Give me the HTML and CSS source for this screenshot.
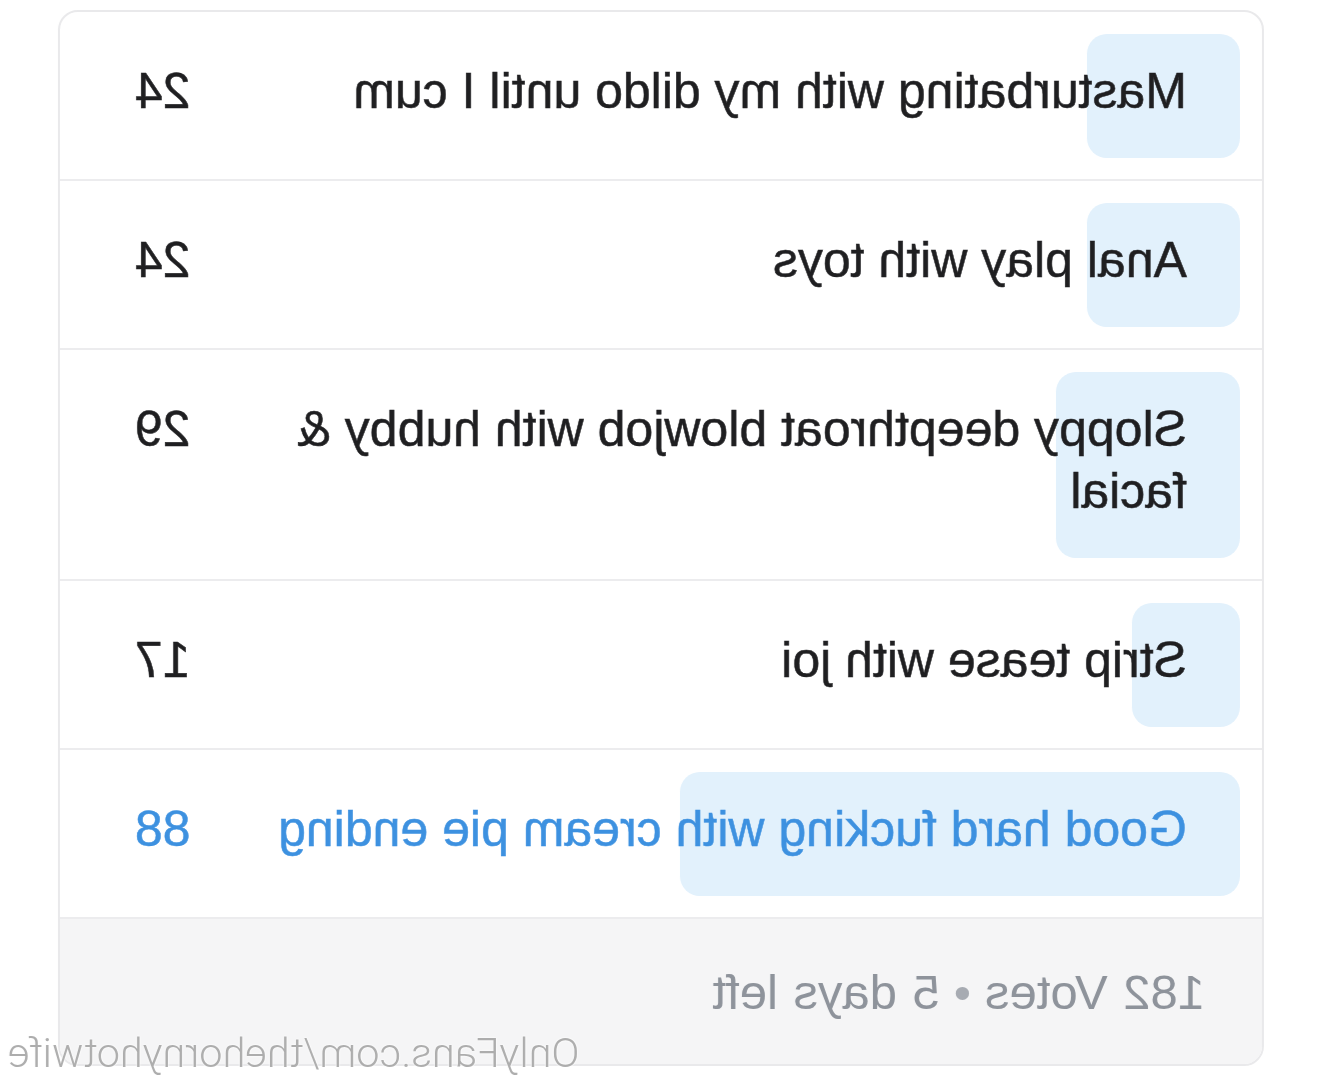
FILE: index.html
```html
<!DOCTYPE html>
<html lang="en">
<head>
  <meta charset="UTF-8">
  <title>Poll</title>
  <meta name="viewport" content="width=device-width, initial-scale=1.0">
  <link rel="stylesheet" href="styles.css">
</head>
<body>

  <div class="mirror">
    <div class="poll">
      <div class="option">
        <div class="choice">
          <div class="bar" style="width: 13.19%"></div>
          <span class="label">Masturbating with my dildo until I cum</span>
          <span class="count">24</span>
        </div>
      </div>
      <div class="option">
        <div class="choice">
          <div class="bar" style="width: 13.19%"></div>
          <span class="label">Anal play with toys</span>
          <span class="count">24</span>
        </div>
      </div>
      <div class="option">
        <div class="choice">
          <div class="bar" style="width: 15.93%"></div>
          <span class="label">Sloppy deepthroat blowjob with hubby &amp; facial</span>
          <span class="count">29</span>
        </div>
      </div>
      <div class="option">
        <div class="choice">
          <div class="bar" style="width: 9.34%"></div>
          <span class="label">Strip tease with joi</span>
          <span class="count">17</span>
        </div>
      </div>
      <div class="option">
        <div class="choice winner">
          <div class="bar" style="width: 48.35%"></div>
          <span class="label">Good hard fucking with cream pie ending</span>
          <span class="count">88</span>
        </div>
      </div>
      <div class="poll-footer">182 Votes <span class="dot">•</span> 5 days left</div>
    </div>

    <div class="watermark">OnlyFans.com/thehornyhotwife</div>
  </div>

</body>
</html>
```

FILE: styles.css
```css
body {
  margin: 0;
  background: #fff;
  color: #1f1f21;
  font-family: 'Liberation Sans', Arial, sans-serif;
}

/* the screenshot is flipped left to right */
.mirror {
  position: relative;
  width: 1322px;
  height: 1080px;
  transform: scaleX(-1);
}

.poll {
  margin: 10px 58px 0;
  border: 2px solid #e9e9eb;
  border-radius: 20px;
  overflow: hidden;
}

.option {
  padding: 22px 22px 21px;
  border-bottom: 2px solid #ececee;
}

.choice {
  position: relative;
  display: flex;
  justify-content: space-between;
  gap: 40px;
  padding: 26px 53px 36px;
  font-size: 50px;
  line-height: 62px;
  -webkit-text-stroke: 0.5px currentColor;
}

.bar {
  position: absolute;
  top: 0;
  left: 0;
  bottom: 0;
  background: #e2f1fc;
  border-radius: 20px;
}

.label,
.count {
  position: relative;
}

.label {
  max-width: 960px;
}

.winner {
  color: #3d91e0;
}

.poll-footer {
  height: 145px;
  display: flex;
  align-items: center;
  gap: 14px;
  padding: 0 57px;
  background: #f5f5f6;
  color: #8e939b;
  font-size: 49px;
  word-spacing: 2px;
}

.dot {
  color: #a7abb2;
}

.watermark {
  position: absolute;
  right: 8px;
  top: 1018px;
  font-family: Roboto, 'Noto Sans', sans-serif;
  font-weight: 300;
  font-size: 41.5px;
  color: #adadad;
  text-shadow: 0 0 2px #fff, 0 0 2px #fff;
}
```
